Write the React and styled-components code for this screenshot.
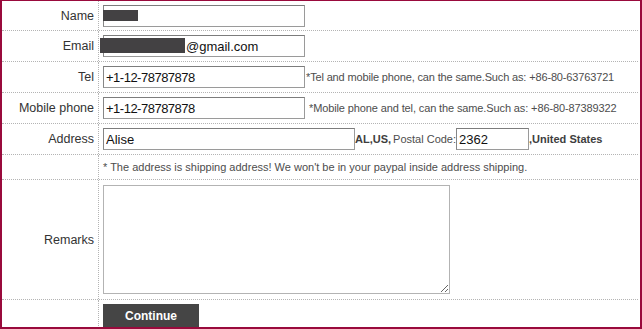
import styled, { createGlobalStyle } from "styled-components";

const GlobalStyle = createGlobalStyle`
 html, body {
  margin: 0;
  padding: 0;
  background: #ffffff;
 }
 body {
  font-family: "Liberation Sans", Arial, sans-serif;
 }
`;

//outer frame with the crimson border
const Frame = styled.div`
 box-sizing: border-box;
 width: 642px;
 height: 329px;
 border: 2px solid #990a3c;
 border-top-width: 1px;
 overflow: hidden;
`;

//height given is the full row incl. its dotted bottom line
const Row = styled.div`
 box-sizing: border-box;
 display: grid;
 grid-template-columns: 97px 1fr;
 height: ${(p) => p.$h}px;
 border-bottom: ${(p) => (p.$last ? "none" : "1px dotted #b4b4b4")};
 margin-right: 2px;
`;

const Label = styled.div`
 display: flex;
 align-items: center;
 justify-content: flex-end;
 padding-right: 4px;
 border-right: 1px dotted #b4b4b4;
 font-size: 12.5px;
 color: #333333;
`;

const Field = styled.div`
 position: relative;
 display: flex;
 align-items: ${(p) => (p.$top ? "flex-start" : "center")};
 padding-left: 4px;
 padding-top: ${(p) => p.$pt || 0}px;
 font-size: 11px;
 color: #4a4a4a;
 white-space: nowrap;
`;

const Input = styled.input`
 box-sizing: border-box;
 width: ${(p) => p.$w}px;
 height: 22px;
 margin: 0;
 padding: 0 0 0 ${(p) => p.$pl || 2}px;
 border: 1px solid #9a9a9a;
 border-top-color: #7c7c7c;
 border-left-color: #868686;
 font-family: "Liberation Sans", Arial, sans-serif;
 font-size: 13px;
 letter-spacing: ${(p) => p.$ls || 0}px;
 color: #111;
 outline: none;
`;

//grey block that hides personal data
const Redact = styled.span`
 position: absolute;
 left: ${(p) => p.$x}px;
 top: ${(p) => p.$y}px;
 width: ${(p) => p.$w}px;
 height: ${(p) => p.$h}px;
 background: #434143;
`;

const Hint = styled.span`
 margin-left: ${(p) => p.$ml || 0}px;
 font-size: 11px;
 letter-spacing: ${(p) => p.$ls || 0}px;
 color: #4d4d4d;
`;

const Bold = styled.b`
 font-size: 11px;
 color: #3e3e3e;
`;

const TextArea = styled.textarea`
 box-sizing: border-box;
 width: 347px;
 height: 109px;
 margin: 0;
 border: 1px solid #b3b3b3;
 font-family: "Liberation Sans", Arial, sans-serif;
 font-size: 13px;
 resize: both;
 outline: none;
`;

const Button = styled.button`
 width: 96px;
 height: 23px;
 margin: 0;
 border: none;
 background: #454545;
 color: #ffffff;
 font-family: "Liberation Sans", Arial, sans-serif;
 font-size: 12px;
 font-weight: bold;
 cursor: pointer;
`;

const App = () => {
 return (
  <>
   <GlobalStyle />
   <Frame>
    <Row $h={30}>
     <Label>Name</Label>
     <Field>
      <Input $w={202} defaultValue="" />
      <Redact $x={4} $y={9} $w={35} $h={11} />
     </Field>
    </Row>
    <Row $h={31}>
     <Label>Email</Label>
     <Field>
      <Input $w={202} $pl={82} defaultValue="@gmail.com" />
      <Redact $x={1} $y={7} $w={85} $h={15} />
     </Field>
    </Row>
    <Row $h={31}>
     <Label>Tel</Label>
     <Field>
      <Input $w={202} $ls={-0.5} defaultValue="+1-12-78787878" />
      <Hint $ml={1} $ls={-0.15}>
       *Tel and mobile phone, can the same.Such as: +86-80-63763721
      </Hint>
     </Field>
    </Row>
    <Row $h={31}>
     <Label>Mobile phone</Label>
     <Field>
      <Input $w={202} $ls={-0.5} defaultValue="+1-12-78787878" />
      <Hint $ml={4} $ls={-0.12}>
       *Mobile phone and tel, can the same.Such as: +86-80-87389322
      </Hint>
     </Field>
    </Row>
    <Row $h={31}>
     <Label>Address</Label>
     <Field>
      <Input $w={252} defaultValue="Alise" />
      <Bold>AL,US,</Bold>
      <Hint $ml={2}>Postal Code:</Hint>
      <Input $w={73} defaultValue="2362" />
      <Bold>,United States</Bold>
     </Field>
    </Row>
    <Row $h={25}>
     <Label />
     <Field>
      <Hint>
       * The address is shipping address! We won't be in your paypal inside
       address shipping.
      </Hint>
     </Field>
    </Row>
    <Row $h={120}>
     <Label>Remarks</Label>
     <Field $top $pt={5}>
      <TextArea />
     </Field>
    </Row>
    <Row $h={28} $last>
     <Label />
     <Field $top $pt={4}>
      <Button>Continue</Button>
     </Field>
    </Row>
   </Frame>
  </>
 );
};

export default App;
